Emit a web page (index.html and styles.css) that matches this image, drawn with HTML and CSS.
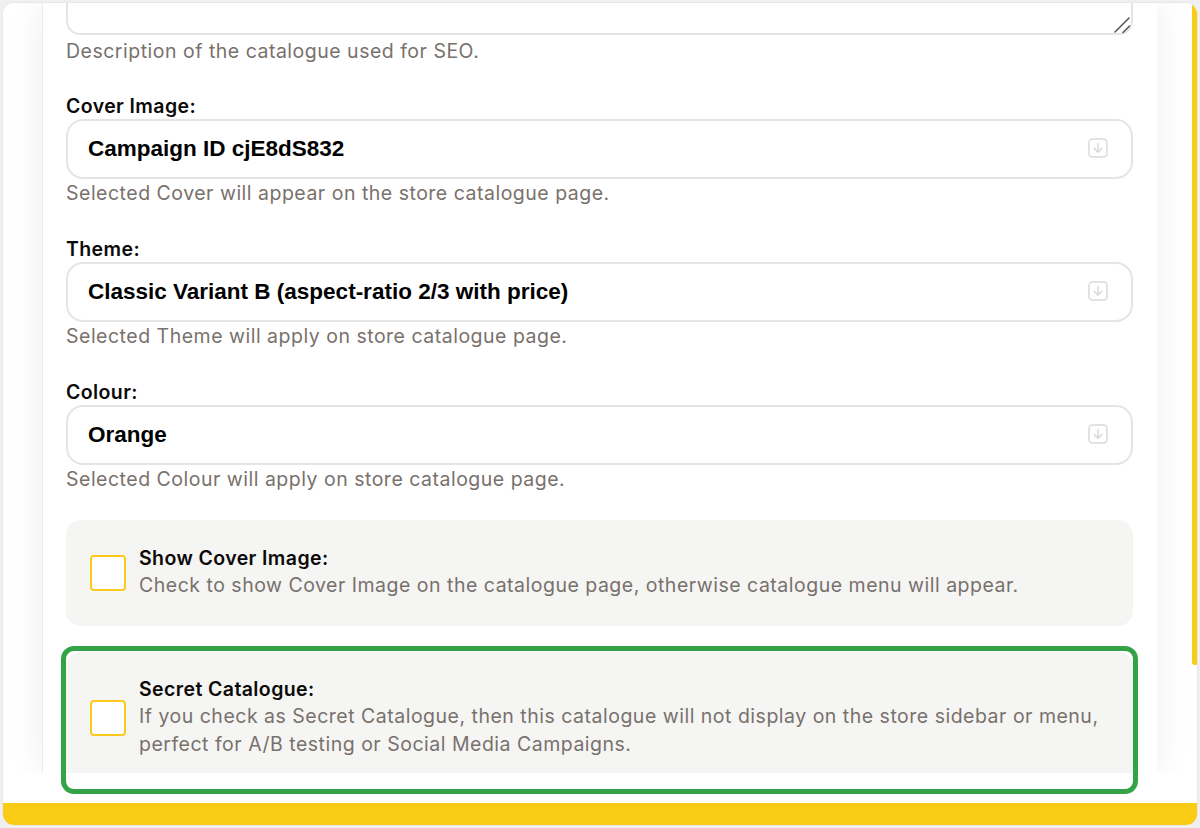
FILE: index.html
```html
<!DOCTYPE html>
<html lang="en">
<head>
<meta charset="utf-8">
<title>Catalogue settings</title>
<link rel="stylesheet" href="styles.css">
</head>
<body>
<div class="frame">
  <div class="viewport">
    <div class="panel">
      <div class="panel-inner">
        <div class="textarea-wrap">
          <textarea class="textarea" aria-label="Description"></textarea>
          <svg class="resize-grip" width="18" height="18" viewBox="0 0 18 18"><path d="M2 16 16 2M10 16.5 16.5 10" fill="none" stroke="#5a5a5a" stroke-width="1.6" stroke-linecap="round"/></svg>
        </div>
        <p class="help help-first">Description of the catalogue used for SEO.</p>

        <div class="field">
          <label class="label">Cover Image:</label>
          <div class="select">
            <span class="select-value">Campaign ID cjE8dS832</span>
            <svg class="select-icon" width="20" height="20" viewBox="0 0 20 20"><rect x="1" y="1" width="18" height="18" rx="3.5" fill="none" stroke="#dcd9d7" stroke-width="1.5"/><path d="M10 5.5V14M6.2 10.4 10 14.2l3.8-3.8" fill="none" stroke="#dcd9d7" stroke-width="1.5" stroke-linecap="round" stroke-linejoin="round"/></svg>
          </div>
          <p class="help">Selected Cover will appear on the store catalogue page.</p>
        </div>

        <div class="field">
          <label class="label">Theme:</label>
          <div class="select">
            <span class="select-value">Classic Variant B (aspect-ratio 2/3 with price)</span>
            <svg class="select-icon" width="20" height="20" viewBox="0 0 20 20"><rect x="1" y="1" width="18" height="18" rx="3.5" fill="none" stroke="#dcd9d7" stroke-width="1.5"/><path d="M10 5.5V14M6.2 10.4 10 14.2l3.8-3.8" fill="none" stroke="#dcd9d7" stroke-width="1.5" stroke-linecap="round" stroke-linejoin="round"/></svg>
          </div>
          <p class="help">Selected Theme will apply on store catalogue page.</p>
        </div>

        <div class="field">
          <label class="label">Colour:</label>
          <div class="select">
            <span class="select-value">Orange</span>
            <svg class="select-icon" width="20" height="20" viewBox="0 0 20 20"><rect x="1" y="1" width="18" height="18" rx="3.5" fill="none" stroke="#dcd9d7" stroke-width="1.5"/><path d="M10 5.5V14M6.2 10.4 10 14.2l3.8-3.8" fill="none" stroke="#dcd9d7" stroke-width="1.5" stroke-linecap="round" stroke-linejoin="round"/></svg>
          </div>
          <p class="help">Selected Colour will apply on store catalogue page.</p>
        </div>

        <div class="check-card">
          <span class="checkbox"></span>
          <div class="check-text">
            <div class="check-title">Show Cover Image:</div>
            <div class="check-desc">Check to show Cover Image on the catalogue page, otherwise catalogue menu will appear.</div>
          </div>
        </div>

        <div class="check-card check-card-secret">
          <span class="checkbox"></span>
          <div class="check-text">
            <div class="check-title">Secret Catalogue:</div>
            <div class="check-desc">If you check as Secret Catalogue, then this catalogue will not display on the store sidebar or menu,<br>perfect for A/B testing or Social Media Campaigns.</div>
          </div>
        </div>
      </div>
    </div>
  </div>
  <div class="footer-gap"></div>
  <div class="footer-bar"></div>
  <div class="scroll-thumb"></div>
  <div class="highlight"></div>
</div>
</body>
</html>
```
FILE: styles.css
```css
* { box-sizing: border-box; }

html, body {
  margin: 0;
  padding: 0;
}

body {
  background: #f0f0f3;
  padding: 2px;
  font-family: "Inter", "Noto Sans", sans-serif;
}

.frame {
  position: relative;
  width: 1196px;
  height: 824px;
  background: #ffffff;
  border: 1px solid #e8e8ec;
  border-radius: 12px;
  overflow: hidden;
  display: flex;
  flex-direction: column;
}

.viewport {
  height: 770px;
  overflow: hidden;
  flex: none;
  padding-left: 39px;
  background: #ffffff;
}

.panel {
  display: flow-root;
  width: 1115px;
  height: 100%;
  background: #ffffff;
  border-left: 1px solid #eceaea;
  box-shadow: 0 0 36px rgba(20, 20, 60, 0.07);
  padding: 0 24px 0 23px;
}

.panel-inner {
  margin-top: -91px;
}

.textarea-wrap {
  position: relative;
}

.textarea {
  display: block;
  width: 100%;
  height: 123px;
  border: 2px solid #e7e5e4;
  border-radius: 14px;
  background: #fff;
  resize: none;
  margin: 0;
  outline: none;
}

.resize-grip {
  position: absolute;
  right: 2px;
  bottom: 1px;
}

.help {
  margin: 0;
  font-size: 19.5px;
  line-height: 28px;
  color: #78716c;
  letter-spacing: 0.5px;
}

.help-first {
  margin-top: 2px;
}

.field {
  margin-top: 29px;
}

.field + .field {
  margin-top: 30px;
}

.label {
  display: block;
  font-size: 19.5px;
  line-height: 25px;
  font-weight: 600;
  letter-spacing: 0.4px;
  color: #0c0a09;
}

.select {
  display: flex;
  align-items: center;
  justify-content: space-between;
  height: 60px;
  border: 2px solid #e7e5e4;
  border-radius: 17px;
  padding: 0 23px 0 20px;
  background: #fff;
}

.select-value {
  font-family: "Liberation Sans", Arial, sans-serif;
  font-weight: 700;
  font-size: 22.5px;
  color: #000;
}

.select-icon {
  display: block;
  margin-top: -3px;
}

.check-card {
  display: flex;
  align-items: center;
  gap: 13px;
  margin-top: 27px;
  padding: 26px 24px 27px;
  background: #f5f5f4;
  border-radius: 15px;
}

.check-card-secret {
  margin-top: 26px;
  padding-top: 25px;
}

.checkbox {
  flex: none;
  width: 36px;
  height: 36px;
  background: #fff;
  border: 2px solid #fbca1c;
  border-radius: 4px;
}

.check-text {
  flex: 1;
}

.check-title {
  font-size: 19.5px;
  line-height: 25px;
  font-weight: 600;
  letter-spacing: 0.4px;
  color: #0c0a09;
}

.check-desc {
  font-size: 19.5px;
  line-height: 28px;
  color: #78716c;
  letter-spacing: 0.5px;
}

.footer-gap {
  height: 30px;
  flex: none;
}

.footer-bar {
  flex: 1;
  background: #facc15;
}

.scroll-thumb {
  position: absolute;
  top: -1px;
  right: -1px;
  width: 6px;
  height: 663px;
  background: #facc15;
  border-radius: 0 0 6px 6px;
}

.highlight {
  position: absolute;
  left: 58px;
  top: 643px;
  width: 1077px;
  height: 148px;
  border: 5px solid #34a347;
  border-radius: 13px;
  pointer-events: none;
}
```
